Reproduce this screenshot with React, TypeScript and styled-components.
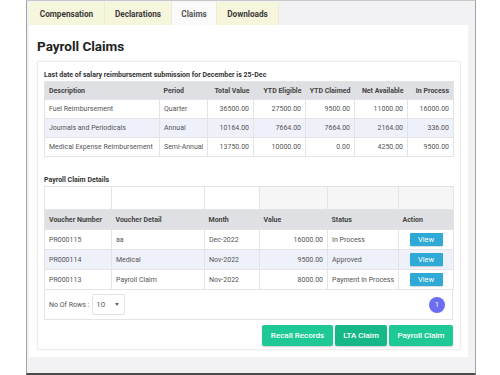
import styled, { createGlobalStyle } from "styled-components";

const GlobalStyle = createGlobalStyle`
  html, body {
    margin: 0;
    padding: 0;
    background: #ffffff;
    font-family: Roboto, "Liberation Sans", sans-serif;
  }
`;

const Frame = styled.div`
  margin-left: 26px;
  width: 444px;
  height: 371px;
  box-sizing: content-box;
  border: 1px solid #a3a3a3;
  border-bottom: 2px solid #4a4a4a;
  border-top: 1px solid #c8c8c8;
  background: #f2f2f5;
  padding: 1px 2px 0 2px;
  display: flex;
  flex-direction: column;
`;

const Tabs = styled.div`
  display: flex;
  height: 23px;
`;

const Tab = styled.div<{ $active?: boolean; $w: number }>`
  width: ${(p) => p.$w}px;
  display: flex;
  align-items: center;
  justify-content: center;
  font-size: 8.2px;
  font-weight: 700;
  color: ${(p) => (p.$active ? "#555" : "#3a3a3a")};
  background: ${(p) => (p.$active ? "#fafafb" : "#f6f6dc")};
  border-right: 1px solid #ececd0;
`;

const Panel = styled.div`
  width: 439px;
  height: 332px;
  background: #ffffff;
  padding: 0 7px 0 8px;
  box-sizing: border-box;
  display: flex;
  flex-direction: column;
`;

const Title = styled.h1`
  margin: 0;
  height: 36px;
  flex-shrink: 0;
  display: flex;
  align-items: center;
  padding-top: 6px;
  box-sizing: border-box;
  font-size: 13.5px;
  font-weight: 700;
  color: #222;
`;

const Card = styled.div`
  height: 289px;
  flex-shrink: 0;
  border: 1px solid #ededed;
  border-radius: 2px;
  box-shadow: 0 0 3px rgba(0, 0, 0, 0.05);
  padding: 0 7px 0 6px;
  box-sizing: border-box;
  display: flex;
  flex-direction: column;
`;

const Caption = styled.div`
  font-size: 7px;
  font-weight: 700;
  color: #333;
  height: 19px;
  display: flex;
  align-items: center;
  padding-top: 6px;
  box-sizing: border-box;
`;

const Table = styled.table`
  width: 409px;
  border-collapse: collapse;
  table-layout: fixed;
  font-size: 7px;
  color: #555;
  border: 1px solid #e4e4e4;
`;

const Th = styled.th<{ $right?: boolean; $h?: number }>`
  height: ${(p) => p.$h ?? 17}px;
  background: #dfe0e3;
  font-weight: 700;
  color: #444;
  text-align: ${(p) => (p.$right ? "right" : "left")};
  padding: 0 4px;
  border: none;
`;

const Tr = styled.tr<{ $alt?: boolean }>`
  background: ${(p) => (p.$alt ? "#eef0fa" : "#ffffff")};
`;

const Td = styled.td<{ $right?: boolean; $h?: number; $center?: boolean }>`
  height: ${(p) => p.$h ?? 18}px;
  padding: 0 4px;
  text-align: ${(p) => (p.$right ? "right" : p.$center ? "center" : "left")};
  border: 1px solid #e4e4e4;
  white-space: nowrap;
`;

const BlankTd = styled.td<{ $shade?: boolean }>`
  height: 20px;
  border: 1px solid #e4e4e4;
  background: ${(p) => (p.$shade ? "#f6f6f7" : "#ffffff")};
`;

const Section = styled.div`
  margin-top: 10px;
`;

const ViewButton = styled.button`
  width: 33px;
  height: 13px;
  border: none;
  border-radius: 1px;
  background: #2fa9d6;
  color: #ffffff;
  font-family: inherit;
  font-size: 7.5px;
  padding: 0;
  display: block;
  margin: 0 auto;
  box-shadow: 0 1px 1px rgba(0, 0, 0, 0.15);
`;

const Footer = styled.div`
  width: 409px;
  height: 30px;
  box-sizing: border-box;
  border: 1px solid #e4e4e4;
  border-top: none;
  display: flex;
  align-items: center;
  padding: 0 4px 0 4px;
  font-size: 7px;
  color: #555;
`;

const RowsSelect = styled.div`
  margin-left: 3px;
  width: 33px;
  height: 21px;
  box-sizing: border-box;
  border: 1px solid #e3e3e3;
  border-radius: 2px;
  display: flex;
  align-items: center;
  justify-content: space-between;
  padding: 0 5px 0 3px;
  font-size: 8px;
  color: #666;
`;

const Caret = styled.span`
  width: 0;
  height: 0;
  border-left: 2.5px solid transparent;
  border-right: 2.5px solid transparent;
  border-top: 3px solid #666;
`;

const PageDot = styled.div`
  margin-left: auto;
  margin-right: 3px;
  width: 16px;
  height: 16px;
  border-radius: 50%;
  background: #6b6ef0;
  color: #fff;
  font-size: 7px;
  display: flex;
  align-items: center;
  justify-content: center;
`;

const Actions = styled.div`
  display: flex;
  justify-content: flex-end;
  gap: 2px;
  margin-top: 5px;
`;

const GreenButton = styled.button<{ $w: number; $dark?: boolean }>`
  width: ${(p) => p.$w}px;
  height: 21px;
  border: none;
  border-radius: 2px;
  background: ${(p) => (p.$dark ? "#17b887" : "#1fc995")};
  color: #ffffff;
  font-family: inherit;
  font-size: 8px;
  font-weight: 500;
  padding: 0;
  box-shadow: 0 1px 2px rgba(0, 0, 0, 0.2);
`;

const summary = [
  ["Fuel Reimbursement", "Quarter", "36500.00", "27500.00", "9500.00", "11000.00", "16000.00"],
  ["Journals and Periodicals", "Annual", "10164.00", "7664.00", "7664.00", "2164.00", "336.00"],
  ["Medical Expense Reimbursement", "Semi-Annual", "13750.00", "10000.00", "0.00", "4250.00", "9500.00"],
];

const claims = [
  ["PR000115", "aa", "Dec-2022", "16000.00", "In Process"],
  ["PR000114", "Medical", "Nov-2022", "9500.00", "Approved"],
  ["PR000113", "Payroll Claim", "Nov-2022", "8000.00", "Payment In Process"],
];

const summaryCols = [115, 48, 46, 52, 49, 53, 46];
const claimCols = [67, 93, 55, 68, 71, 55];

export default function App() {
  return (
    <>
      <GlobalStyle />
      <Frame>
        <Tabs>
          <Tab $w={75}>Compensation</Tab>
          <Tab $w={66}>Declarations</Tab>
          <Tab $w={44} $active>Claims</Tab>
          <Tab $w={61}>Downloads</Tab>
        </Tabs>
        <Panel>
          <Title>Payroll Claims</Title>
          <Card>
            <Caption>Last date of salary reimbursement submission for December is 25-Dec</Caption>
            <Table>
              <colgroup>
                {summaryCols.map((w, i) => (
                  <col key={i} style={{ width: w }} />
                ))}
              </colgroup>
              <thead>
                <tr>
                  <Th>Description</Th>
                  <Th>Period</Th>
                  <Th $right>Total Value</Th>
                  <Th $right>YTD Eligible</Th>
                  <Th $right>YTD Claimed</Th>
                  <Th $right>Net Available</Th>
                  <Th $right>In Process</Th>
                </tr>
              </thead>
              <tbody>
                {summary.map((r, i) => (
                  <Tr key={i} $alt={i === 1}>
                    {r.map((c, j) => (
                      <Td key={j} $right={j > 1}>
                        {c}
                      </Td>
                    ))}
                  </Tr>
                ))}
              </tbody>
            </Table>

            <Section>
              <Caption>Payroll Claim Details</Caption>
              <Table>
                <colgroup>
                  {claimCols.map((w, i) => (
                    <col key={i} style={{ width: w }} />
                  ))}
                </colgroup>
                <thead>
                  <tr>
                    {claimCols.map((_, i) => (
                      <BlankTd key={i} $shade={i >= 3} />
                    ))}
                  </tr>
                  <tr>
                    <Th $h={19}>Voucher Number</Th>
                    <Th $h={19}>Voucher Detail</Th>
                    <Th $h={19}>Month</Th>
                    <Th $h={19}>Value</Th>
                    <Th $h={19}>Status</Th>
                    <Th $h={19}>Action</Th>
                  </tr>
                </thead>
                <tbody>
                  {claims.map((r, i) => (
                    <Tr key={i} $alt={i === 1}>
                      <Td $h={19}>{r[0]}</Td>
                      <Td $h={19}>{r[1]}</Td>
                      <Td $h={19}>{r[2]}</Td>
                      <Td $h={19} $right>{r[3]}</Td>
                      <Td $h={19}>{r[4]}</Td>
                      <Td $h={19} $center>
                        <ViewButton>View</ViewButton>
                      </Td>
                    </Tr>
                  ))}
                </tbody>
              </Table>
              <Footer>
                No Of Rows :
                <RowsSelect>
                  10
                  <Caret />
                </RowsSelect>
                <PageDot>1</PageDot>
              </Footer>
            </Section>

            <Actions>
              <GreenButton $w={71}>Recall Records</GreenButton>
              <GreenButton $w={52} $dark>LTA Claim</GreenButton>
              <GreenButton $w={64}>Payroll Claim</GreenButton>
            </Actions>
          </Card>
        </Panel>
      </Frame>
    </>
  );
}
